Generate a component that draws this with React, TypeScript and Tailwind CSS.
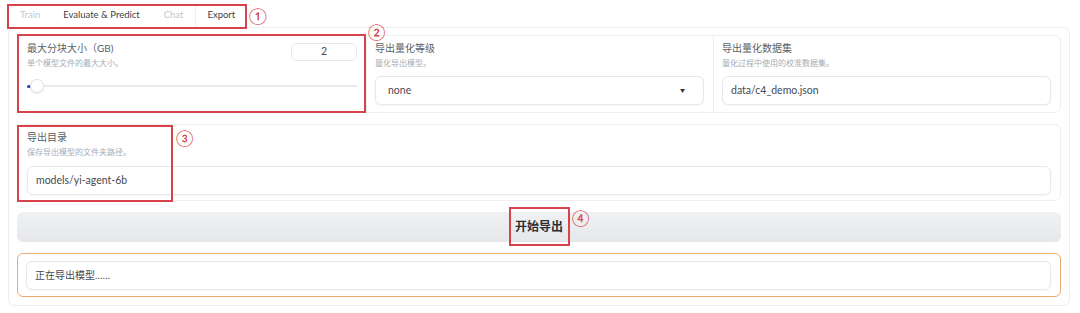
const red = "border-2 border-[#d8434b]";

function Field({ value, className = "" }: { value: string; className?: string }) {
  return (
    <div
      className={
        "flex items-center rounded-md border border-[#e6e8eb] bg-white px-[8px] text-[10.5px] text-[#454a53] shadow-[0_1px_2px_rgba(0,0,0,0.04)] " +
        className
      }
    >
      {value}
    </div>
  );
}

function Label({ title, desc }: { title: string; desc: string }) {
  return (
    <div>
      <div className="text-[10px] leading-[14px] text-[#5a5f67]">{title}</div>
      <div className="mt-[2px] text-[8px] leading-[12px] text-[#a8adb4]">{desc}</div>
    </div>
  );
}

export default function App() {
  return (
    <div className="relative h-[313px] w-[1080px] overflow-hidden bg-white font-['Lato','Noto_Sans_CJK_SC',sans-serif]">
      {/* tabs */}
      <div className="ml-[9px] mt-[4px] flex h-[23px] items-end text-[9.5px]">
        <div className="flex h-full items-center px-[11px] text-[#c4c7cc]">Train</div>
        <div className="flex h-full items-center px-[12px] text-[#3b3f47]">Evaluate &amp; Predict</div>
        <div className="flex h-full items-center px-[12px] text-[#c4c7cc]">Chat</div>
        <div className="flex h-full items-center border-l border-[#eceef1] bg-white px-[11px] text-[#3b3f47]">Export</div>
      </div>

      {/* main panel */}
      <div className="ml-[8px] flex h-[279px] w-[1062px] flex-col gap-[11px] rounded-md border border-[#eceef0] px-[8px] pt-[7px]">
        <div className="grid h-[78px] grid-cols-[349px_347px_1fr] divide-x divide-[#eceef0] rounded-md border border-[#eceef0]">
          <div className="relative pl-[9px] pr-[9px] pt-[5px]">
            <div className="flex justify-between">
              <Label title="最大分块大小（GB)" desc="单个模型文件的最大大小。" />
              <div className="mt-[2px] flex h-[18px] w-[66px] items-center justify-center rounded-md border border-[#e6e8eb] text-[10.5px] text-[#454a53]">
                2
              </div>
            </div>
            <div className="mt-[10px] flex items-center">
              <div className="h-[3px] w-[4px] rounded-full bg-[#2f4aa8]" />
              <div className="ml-[-1px] h-[14px] w-[14px] rounded-full border border-[#dcdfe3] bg-white shadow-[0_1px_2px_rgba(0,0,0,0.08)]" />
              <div className="h-[2px] flex-1 bg-[#e8eaed]" />
            </div>
          </div>
          <div className="pl-[8px] pr-[9px] pt-[5px]">
            <Label title="导出量化等级" desc="量化导出模型。" />
            <div className="mt-[7px] flex h-[29px] items-center justify-between rounded-md border border-[#e6e8eb] bg-white pl-[12px] pr-[18px] text-[10.5px] text-[#454a53] shadow-[0_1px_2px_rgba(0,0,0,0.04)]">
              <span>none</span>
              <span className="text-[5px] text-[#333]">▼</span>
            </div>
          </div>
          <div className="pl-[8px] pr-[9px] pt-[5px]">
            <Label title="导出量化数据集" desc="量化过程中使用的校准数据集。" />
            <Field value="data/c4_demo.json" className="mt-[7px] h-[29px]" />
          </div>
        </div>

        <div className="h-[77px] rounded-md border border-[#eceef0] pl-[9px] pr-[9px] pt-[5px]">
          <Label title="导出目录" desc="保存导出模型的文件夹路径。" />
          <Field value="models/yi-agent-6b" className="mt-[8px] h-[29px]" />
        </div>

        <div className="flex h-[30px] items-center justify-center rounded-md bg-gradient-to-b from-[#f0f1f3] to-[#e6e7ea] text-[12px] font-bold text-[#2b2f36]">
          开始导出
        </div>

        <div className="h-[44px] rounded-md border-[1.5px] border-[#eeaa6e] pl-[8px] pr-[9px] pt-[7px]">
          <Field value="正在导出模型……" className="h-[29px] text-[10px]" />
        </div>
      </div>

      {/* annotations */}
      <div className={"pointer-events-none absolute left-[7px] top-[4px] h-[25px] w-[240px] " + red} />
      <div className="absolute left-[249px] top-[6px] text-[16px] leading-[20px] text-[#d8434b]">①</div>
      <div className={"pointer-events-none absolute left-[17px] top-[34px] h-[79px] w-[349px] " + red} />
      <div className="absolute left-[368px] top-[22px] text-[16px] leading-[20px] text-[#d8434b]">②</div>
      <div className={"pointer-events-none absolute left-[17px] top-[125px] h-[77px] w-[156px] " + red} />
      <div className="absolute left-[176px] top-[128px] text-[16px] leading-[20px] text-[#d8434b]">③</div>
      <div className={"pointer-events-none absolute left-[509px] top-[207px] h-[39px] w-[61px] " + red} />
      <div className="absolute left-[572px] top-[208px] text-[16px] leading-[20px] text-[#d8434b]">④</div>
    </div>
  );
}
